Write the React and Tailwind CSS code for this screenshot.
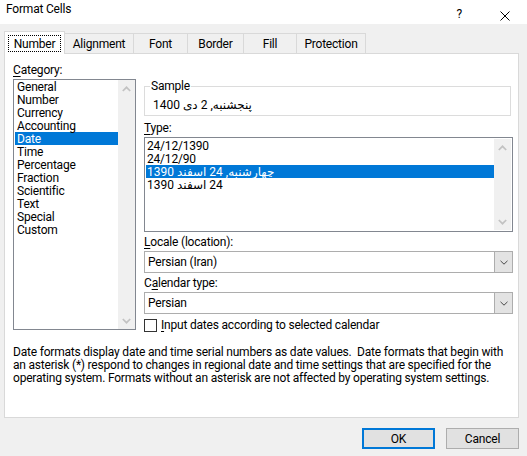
import React from "react";

const F = "font-['Roboto','DejaVu_Sans',sans-serif]";

function Chevron({ up, color = "#c2c2c2" }) {
  return (
    <svg width="9" height="6" viewBox="0 0 9 6" className="block">
      <polyline
        points={up ? "0.8,5 4.5,1.3 8.2,5" : "0.8,1 4.5,4.7 8.2,1"}
        fill="none"
        stroke={color}
        strokeWidth="1.7"
      />
    </svg>
  );
}

function ScrollBar() {
  return (
    <div className="w-[17px] h-full bg-[#f0f0f0] flex flex-col justify-between">
      <div className="h-[17px] flex items-center justify-center">
        <Chevron up />
      </div>
      <div className="h-[17px] flex items-center justify-center">
        <Chevron />
      </div>
    </div>
  );
}

function DropDown({ value }) {
  return (
    <div className="h-[22px] w-[369px] border border-[#adadad] bg-white flex">
      <div className="flex-1 pl-[3px] flex items-center">{value}</div>
      <div className="w-[18px] h-full bg-[#e3e3e3] border-l border-[#adadad] flex items-center justify-center">
        <svg width="8" height="5" viewBox="0 0 8 5" className="block">
          <polyline points="0.5,0.8 4,4.2 7.5,0.8" fill="none" stroke="#4a4a4a" strokeWidth="1" />
        </svg>
      </div>
    </div>
  );
}

const categories = [
  "General",
  "Number",
  "Currency",
  "Accounting",
  "Date",
  "Time",
  "Percentage",
  "Fraction",
  "Scientific",
  "Text",
  "Special",
  "Custom",
];

const types = [
  "24/12/1390",
  "24/12/90",
  "چهارشنبه, 24 اسفند 1390",
  "\u200F24 اسفند 1390",
];

export default function App() {
  return (
    <div className={`w-[527px] h-[456px] bg-[#f0f0f0] flex flex-col text-[12px] leading-[16px] tracking-[-0.2px] text-black ${F}`}>
      {/* title bar */}
      <div className="h-[24px] bg-white flex items-start pl-[6px] pr-[17px]">
        <span className="mt-[1px]">Format Cells</span>
        <div className="ml-auto flex items-start">
          <span className="mt-[6px]">?</span>
          <svg width="10" height="10" viewBox="0 0 10 10" className="block mt-[11px] ml-[38px]">
            <path d="M0.5 0.5 L9.5 9.5 M9.5 0.5 L0.5 9.5" stroke="#000" strokeWidth="1" fill="none" />
          </svg>
        </div>
      </div>

      {/* tabs */}
      <div className="mt-[7px] h-[22px] flex items-end pl-[4px]">
        <div className="relative z-10 -mb-px h-[23px] w-[61px] bg-white border-t border-l border-r border-[#d9d9d9] flex justify-center pt-[3px]">
          <div className="h-[17px] px-[5px] border border-dotted border-black flex items-center">Number</div>
        </div>
        <div className="h-[20px] w-[69px] border-t border-r border-[#d9d9d9] flex items-center justify-center">Alignment</div>
        <div className="h-[20px] w-[54px] border-t border-r border-[#d9d9d9] flex items-center justify-center">Font</div>
        <div className="h-[20px] w-[56px] border-t border-r border-[#d9d9d9] flex items-center justify-center">Border</div>
        <div className="h-[20px] w-[53px] border-t border-r border-[#d9d9d9] flex items-center justify-center">Fill</div>
        <div className="h-[20px] w-[69px] border-t border-r border-[#d9d9d9] flex items-center justify-center">Protection</div>
      </div>

      {/* panel */}
      <div className="ml-[4px] w-[515px] h-[365px] border border-[#d9d9d9] bg-white pt-[8px] pl-[8px] flex flex-col">
        <div className="flex h-[271px]">
          {/* left column */}
          <div className="w-[123px] flex flex-col">
            <div className="h-[16px]">
              <span className="underline underline-offset-[2px]">C</span>ategory:
            </div>
            <div className="mt-[1px] h-[251px] border border-[#828790] flex">
              <div className="flex-1 pl-[1px]">
                {categories.map((c) => (
                  <div
                    key={c}
                    className={`h-[13px] leading-[14px] pl-[2px] ${c === "Date" ? "bg-[#0078d7] text-white" : ""}`}
                  >
                    {c}
                  </div>
                ))}
              </div>
              <ScrollBar />
            </div>
          </div>

          {/* right column */}
          <div className="ml-[8px] w-[369px] flex flex-col">
            <div className="mt-[24px] h-[30px] w-[367px] border border-[#dcdcdc] relative pl-[8px] pt-[10px]">
              <span className="absolute -top-[9px] left-[5px] px-[1px] bg-white">Sample</span>
              <div className="leading-[16px]">پنجشنبه, 2 دی 1400</div>
            </div>

            <div className="mt-[4px] h-[16px]">
              <span className="underline underline-offset-[2px]">T</span>ype:
            </div>
            <div className="mt-[1px] h-[95px] border border-[#828790] p-[1px] flex">
              <div className="flex-1">
                {types.map((t, i) => (
                  <div
                    key={i}
                    className={`h-[13px] leading-[14px] pl-[1px] ${i === 2 ? "bg-[#0078d7] text-white" : ""}`}
                  >
                    {t}
                  </div>
                ))}
              </div>
              <ScrollBar />
            </div>

            <div className="mt-[2px] h-[16px]">
              <span className="underline underline-offset-[2px]">L</span>ocale (location):
            </div>
            <div className="mt-[1px]">
              <DropDown value="Persian (Iran)" />
            </div>

            <div className="mt-[2px] h-[16px]">
              C<span className="underline underline-offset-[2px]">a</span>lendar type:
            </div>
            <div className="mt-[1px]">
              <DropDown value="Persian" />
            </div>

            <div className="mt-[3px] h-[16px] flex items-center">
              <div className="w-[13px] h-[13px] border border-[#333333] bg-white" />
              <span className="ml-[4px]">
                <span className="underline underline-offset-[2px]">I</span>nput dates according to selected calendar
              </span>
            </div>
          </div>
        </div>

        <div className="mt-[13px] leading-[13px] whitespace-nowrap">
          Date formats display date and time serial numbers as date values.{"\u00a0 "}Date formats that begin with
          <br />
          an asterisk (*) respond to changes in regional date and time settings that are specified for the
          <br />
          operating system. Formats without an asterisk are not affected by operating system settings.
        </div>
      </div>

      {/* buttons */}
      <div className="mt-[10px] flex justify-end pr-[8px] gap-[11px]">
        <button className="w-[73px] h-[21px] border-2 border-[#0078d7] bg-[#e1e1e1] flex items-center justify-center">
          OK
        </button>
        <button className="w-[73px] h-[21px] border border-[#adadad] bg-[#e1e1e1] flex items-center justify-center">
          Cancel
        </button>
      </div>
    </div>
  );
}
